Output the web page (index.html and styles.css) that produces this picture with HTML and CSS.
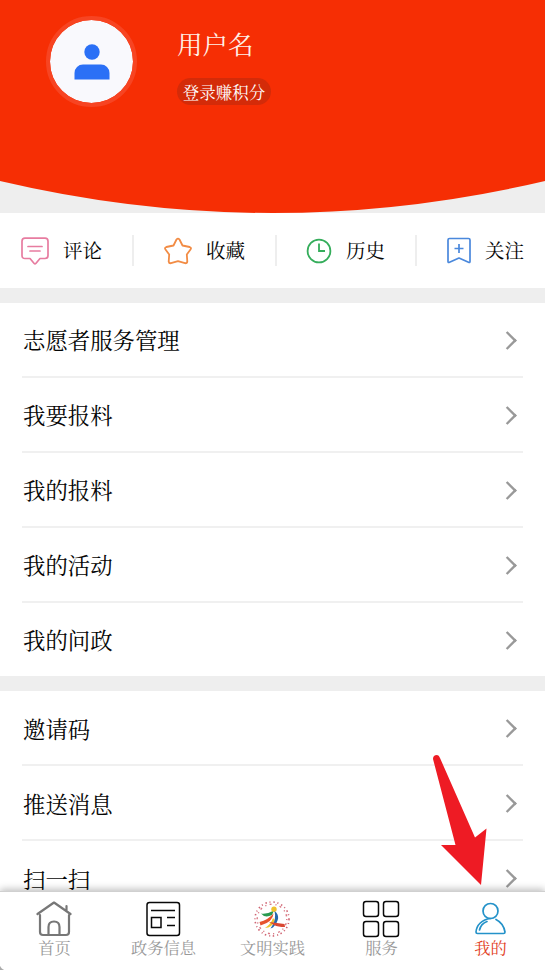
FILE: index.html
```html
<!DOCTYPE html>
<html lang="zh-CN">
<head>
<meta charset="utf-8">
<title>我的</title>
<link rel="stylesheet" href="styles.css">
</head>
<body>
<div class="screen">
  <header class="hero">
    <svg class="curve" viewBox="0 0 545 213" preserveAspectRatio="none"><path d="M0 0H545V181Q409 213 272.500 213Q136 213 0 181Z" fill="#f62e04"/></svg>
    <div class="profile">
      <div class="avatar">
        <svg width="36" height="36" viewBox="0 0 36 36" fill="#2b70f6"><circle cx="18" cy="8" r="7.700"/><path d="M.5 35.500V29a8.500 8.500 0 0 1 8.500-8.500h18a8.500 8.500 0 0 1 8.500 8.500v6.500z"/></svg>
      </div>
      <div class="who">
        <div class="name">用户名</div>
        <div class="points">登录赚积分</div>
      </div>
    </div>
  </header>

  <nav class="quick">
    <a class="quick-item"><svg class="q1" width="28" height="28" viewBox="0 0 28 28" fill="none" stroke="#e77ca0" stroke-width="1.700" stroke-linejoin="round" stroke-linecap="round"><path d="M4 1.200H24Q27 1.200 27 4.200V18.500Q27 21.500 24 21.500H19L14.800 26.500Q14 27.500 13.200 26.500L9 21.500H4Q1 21.500 1 18.500V4.200Q1 1.200 4 1.200ZM7 9.500H21M9 14H19"/></svg><span>评论</span></a>
    <a class="quick-item"><svg class="q2" width="28" height="28" viewBox="0 0 28 28" fill="none" stroke="#f28c45" stroke-width="1.800" stroke-linejoin="round"><path d="M12.500 2.500Q14 .8 15.500 2.500L18.500 8.500L25.700 10Q27.800 10.800 26.500 12.500L22.800 17.500L23.300 24.500Q23 26.500 21 26.200L14 24.200L7 26.200Q5 26.500 4.700 24.500L5.200 17.500L1.500 12.500Q.2 10.800 2.300 10L9.500 8.500Z"/></svg><span>收藏</span></a>
    <a class="quick-item"><svg class="q3" width="26" height="26" viewBox="0 0 26 26" fill="none" stroke="#35ad5b" stroke-width="1.800"><circle cx="13" cy="13" r="11.400"/><path d="M13 5.500V13H19"/></svg><span>历史</span></a>
    <a class="quick-item"><svg class="q4" width="24" height="27" viewBox="0 0 24 27" fill="none" stroke="#4a88dc" stroke-width="1.700" stroke-linejoin="round"><path d="M1 3Q1 1.500 2.500 1.500H21.500Q23 1.500 23 3V24.500Q23 26 21.500 25.300L12 21L2.500 25.300Q1 26 1 24.500ZM7.500 11.500H16.500M12 7V16"/></svg><span>关注</span></a>
  </nav>

  <main class="lists">
    <section class="group">
      <div class="row"><span>志愿者服务管理</span><i class="chevron"></i></div>
      <div class="row"><span>我要报料</span><i class="chevron"></i></div>
      <div class="row"><span>我的报料</span><i class="chevron"></i></div>
      <div class="row"><span>我的活动</span><i class="chevron"></i></div>
      <div class="row"><span>我的问政</span><i class="chevron"></i></div>
    </section>
    <section class="group">
      <div class="row"><span>邀请码</span><i class="chevron"></i></div>
      <div class="row"><span>推送消息</span><i class="chevron"></i></div>
      <div class="row"><span>扫一扫</span><i class="chevron"></i></div>
    </section>
  </main>

  <footer class="tabs">
    <a class="tab"><svg width="36" height="38" viewBox="0 0 36 38" fill="none" stroke="#777" stroke-width="2.200" stroke-linecap="round" stroke-linejoin="round"><path d="M1.500 14L18 2.500L34.500 14M30.500 10V6M4 15V32Q4 35 7 35H30Q33 35 33 32V15M12.500 35V27Q12.500 21.500 18 21.500Q23.500 21.500 23.500 27V35"/></svg><span>首页</span></a>
    <a class="tab"><svg width="36" height="38" viewBox="0 0 36 38" fill="none" stroke="#080808" stroke-width="1.500"><rect x="2" y="2.500" width="32.500" height="33" rx="2.500"/><path d="M6 10.500H30M22 17.500H30M22 25.500H30M6.500 17.500H16V27.500H6.500Z"/></svg><span>政务信息</span></a>
    <a class="tab"><svg width="38" height="38" viewBox="0 0 38 38"><circle cx="19" cy="19" r="17" fill="none" stroke="#cf6573" stroke-width="1.600" stroke-dasharray="1.500 2.600 1 3"/><circle cx="19" cy="19" r="14.800" fill="none" stroke="#d97884" stroke-width="1.400" stroke-dasharray="1.200 3.200 2 4"/><path fill="#299a50" d="M8 13.500Q14 14.500 21 10.500L19 15Q12 18.500 8 13.500Z"/><circle cx="21" cy="9.200" r="2.700" fill="#efc02c"/><path fill="#e6532e" d="M6.500 22Q15 20 20.500 13.500Q20 22 7.500 25.500Z"/><path fill="#efc52d" d="M20 18Q18 24 12 28Q19 28 22 20Z"/><path fill="#2468ad" d="M21.500 11Q29.500 17 20 27.500L17.500 28.500Q24 20 21.500 11Z"/><path fill="#d94732" d="M16 22Q24 23 31.500 24L32 27Q25 27 21 25Z"/></svg><span>文明实践</span></a>
    <a class="tab"><svg width="38" height="38" viewBox="0 0 38 38" fill="none" stroke="#080808" stroke-width="1.500"><rect x="1.500" y="1.500" width="15" height="15" rx="2.500"/><rect x="21.500" y="1.500" width="15" height="15" rx="2.500"/><rect x="1.500" y="21.500" width="15" height="15" rx="2.500"/><rect x="21.500" y="21.500" width="15" height="15" rx="2.500"/></svg><span>服务</span></a>
    <a class="tab active"><svg width="34" height="38" viewBox="0 0 34 38" fill="none" stroke="#2492c9" stroke-width="1.700" stroke-linecap="round" stroke-linejoin="round"><circle cx="17.500" cy="11" r="7.500"/><path d="M17.500 18.500C9 19.500 3.500 25 3 32Q3 33.500 4.500 33.500H30.500Q32 33.500 32 32C31 26 28 22 23 19.500M6.500 30Q8 23.500 14 21.500"/></svg><span>我的</span></a>
  </footer>

  <svg class="pointer" width="58" height="132" viewBox="0 0 58 132"><path d="M1 5Q1 1 5 1Q7 1 8 4L43 83.500L54.500 74.500L49 131L9 91L23.500 91Z" fill="#ee1b24"/></svg>
</div>
</body>
</html>
```
FILE: styles.css
```css
* { box-sizing: border-box; }
body { margin: 0; background: #eee; }
.screen {
  position: relative;
  width: 545px;
  height: 970px;
  overflow: hidden;
  display: flex;
  flex-direction: column;
  background: #eee;
  color: #050505;
  font-family: "Noto Serif CJK SC", "Noto Serif SC", "Noto Sans CJK SC", serif;
}
.hero { position: relative; height: 213px; flex: none; }
.curve { position: absolute; inset: 0; width: 100%; height: 100%; }
.profile { position: relative; display: flex; padding: 16px 0 0 46px; color: #fff; }
.avatar {
  width: 91px;
  height: 91px;
  border: 4px solid #f74422;
  border-radius: 50%;
  background: #f9f9fd;
  background-clip: padding-box;
  display: flex;
  align-items: center;
  justify-content: center;
}
.who { margin-left: 40px; padding-top: 7px; }
.name { font-size: 25.500px; line-height: 40px; color: #fff1e8; }
.points {
  margin-top: 15px;
  width: 94px;
  height: 27px;
  border-radius: 14px;
  background: #d42b09;
  font-size: 16.500px;
  line-height: 28px;
  text-align: center;
  white-space: nowrap;
}
.quick {
  height: 75px;
  flex: none;
  display: grid;
  grid-template-columns: 132px 143px 140px 130px;
  background: #fff;
}
.quick-item { display: flex; align-items: center; font-size: 19.500px; }
.quick-item + .quick-item { background: linear-gradient(#eee, #eee) left center / 2px 31px no-repeat; }
.quick-item span { line-height: 28px; margin-top: -2px; }
.q1 { margin: 0 14px 0 21px; }
.q2 { margin: 0 14px 0 32px; }
.q3 { margin: 0 14px 0 31px; }
.q4 { margin: 0 14px 0 32px; }
.lists { flex: 1; min-height: 0; overflow: hidden; padding-top: 15px; display: flex; flex-direction: column; gap: 15px; }
.group { flex: none; padding: 0 22px; background: #fff; }
.row {
  height: 75px;
  display: flex;
  align-items: center;
  justify-content: space-between;
  padding: 0 10px 0 1px;
  border-bottom: 2px solid #f0f0f0;
  font-size: 22.400px;
}
.row:last-child { height: 73px; border-bottom: 0; }
.row span { line-height: 34px; margin-top: -2px; }
.group + .group .row span { margin-top: 0; }
.chevron { width: 11px; height: 11px; margin-top: 1px; border: solid #999; border-width: 2px 2px 0 0; transform: rotate(45deg) scale(1.200); }
.tabs {
  position: relative;
  height: 79px;
  flex: none;
  display: grid;
  grid-template-columns: repeat(5, 1fr);
  background: radial-gradient(circle at 100% 0, #fff 7px, #aaa 8px) left bottom / 7px 7px no-repeat, #fff;
  border-top: 1px solid #d0d0d0;
  box-shadow: 0 -2px 7px rgba(0, 0, 0, .25);
}
.tab { display: flex; flex-direction: column; align-items: center; color: #999; font-size: 16.300px; }
.tab svg { height: 38px; margin-top: 8px; margin-right: 1px; flex: none; }
.tab span { line-height: 22px; margin-top: -2px; }
.tab.active { color: #e23e1d; }
.pointer { position: absolute; left: 432px; top: 754px; }
```
